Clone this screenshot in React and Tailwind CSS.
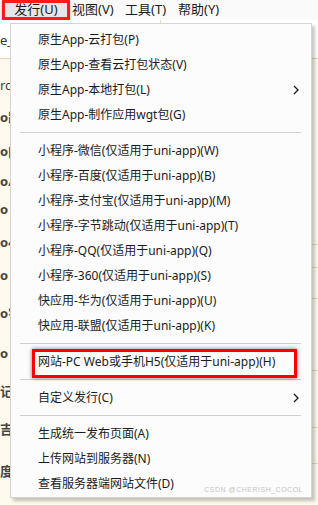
import React from 'react';

const font = { fontFamily: '"Noto Sans", "Noto Sans CJK SC", sans-serif' };

const groups = [
    [
        { label: '原生App-云打包(P)' },
        { label: '原生App-查看云打包状态(V)' },
        { label: '原生App-本地打包(L)', sub: true },
        { label: '原生App-制作应用wgt包(G)' },
    ],
    [
        { label: '小程序-微信(仅适用于uni-app)(W)' },
        { label: '小程序-百度(仅适用于uni-app)(B)' },
        { label: '小程序-支付宝(仅适用于uni-app)(M)' },
        { label: '小程序-字节跳动(仅适用于uni-app)(T)' },
        { label: '小程序-QQ(仅适用于uni-app)(Q)' },
        { label: '小程序-360(仅适用于uni-app)(S)' },
        { label: '快应用-华为(仅适用于uni-app)(U)' },
        { label: '快应用-联盟(仅适用于uni-app)(K)' },
    ],
    [{ label: '网站-PC Web或手机H5(仅适用于uni-app)(H)', marked: true }],
    [{ label: '自定义发行(C)', sub: true }],
    [
        { label: '生成统一发布页面(A)' },
        { label: '上传网站到服务器(N)' },
        { label: '查看服务器端网站文件(D)' },
    ],
];

// fragments of the editor peeking out at the left edge
const gutter = [
    { h: 14, t: '' },
    { h: 26, t: 'rc', c: 'text-[#2fae73] font-normal' },
    { h: 38, t: 'o跹' },
    { h: 30, t: 'o[' },
    { h: 29, t: 'o/' },
    { h: 28, t: 'o|' },
    { h: 37, t: 'o4' },
    { h: 30, t: 'o|' },
    { h: 45, t: 'o宇' },
    { h: 36, t: 'o|' },
    { h: 40, t: '记', c: 'text-[#2fae73]' },
    { h: 35, t: '吉/' },
    { h: 50, t: '度/' },
];

const rightLines = [186, 23, 31, 72, 57, 36];

function Chevron() {
    return (
        <svg width="6" height="10" viewBox="0 0 6 10" className="mr-[12px]">
            <path d="M1 1 L5 5 L1 9" fill="none" stroke="#1a1a1a" strokeWidth="1.3" />
        </svg>
    );
}

function Item({ item }) {
    return (
        <div className="relative flex h-[25px] items-center justify-between">
            <span className="pl-[27px] text-[12px] text-[#1b1b1b]">{item.label}</span>
            {item.sub && <Chevron />}
            {item.marked && (
                <div className="absolute left-[21px] top-0 h-[29px] w-[265px] border-[3px] border-[#ff0000] shadow-[0_0_4px_rgba(0,0,0,0.55)]" />
            )}
        </div>
    );
}

export default function App() {
    return (
        <div className="relative h-[505px] w-[318px] overflow-hidden bg-[#fdf9ec]" style={font}>
            {/* menu bar */}
            <div className="flex h-[20px] items-center bg-[#fafafa] text-[13px] text-[#1b1b1b]">
                <div className="ml-[2px] flex h-[20px] w-[68px] items-center justify-center border-[3px] border-[#ff1a1a] bg-[#e4e6ea] shadow-[0_2px_3px_rgba(0,0,0,0.3)]">
                    发行(U)
                </div>
                <div className="ml-[2px] w-[53px]">视图(V)</div>
                <div className="w-[53px]">工具(T)</div>
                <div className="w-[53px]">帮助(Y)</div>
            </div>

            {/* editor behind */}
            <div className="flex">
                <div className="w-[160px]">
                    <div className="flex h-[38px] items-end bg-white pb-[8px] text-[13px] text-[#333]">e_</div>
                    <div className="h-[1px] bg-[#e3d3ad]" />
                    {gutter.map((g, i) => (
                        <div
                            key={i}
                            className={`flex items-center overflow-hidden text-[13px] font-bold text-[#444] ${g.c || ''}`}
                            style={{ height: g.h }}
                        >
                            {g.t}
                        </div>
                    ))}
                </div>
                <div className="flex-1 border-l border-[#e8dcc0]">
                    <div className="h-[38px] bg-white" />
                    <div className="h-[1px] bg-[#e3d3ad]" />
                    {rightLines.map((h, i) => (
                        <div key={i} className="border-b border-[#e6d9b8]" style={{ height: h }} />
                    ))}
                </div>
            </div>

            {/* dropdown */}
            <div className="absolute left-[10px] top-[23px] w-[302px] border border-[#d4d4d4] bg-[#fcfcfc] pb-[1px] pt-[3px] shadow-[3px_3px_3px_rgba(0,0,0,0.22)]">
                {groups.map((g, gi) => (
                    <div key={gi}>
                        {gi > 0 && (
                            <div className="flex h-[11px] items-center">
                                <div className="ml-[9px] mr-[10px] h-[1px] flex-1 bg-[#cfcfcf]" />
                            </div>
                        )}
                        {g.map((item) => (
                            <Item key={item.label} item={item} />
                        ))}
                    </div>
                ))}
                <div className="absolute bottom-[2px] right-[8px] text-[7px] tracking-[0.5px] text-[#c4c4c4]" style={{ fontFamily: '"Liberation Sans", sans-serif' }}>
                    CSDN @CHERISH_COCOL
                </div>
            </div>
        </div>
    );
}
